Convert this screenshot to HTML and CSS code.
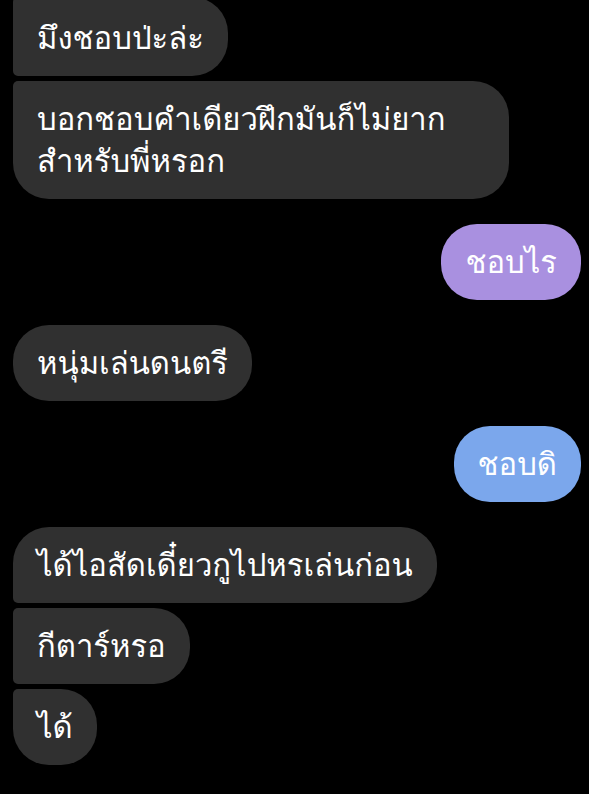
FILE: index.html
```html
<html>
<head>
<meta charset="utf-8">
<link rel="stylesheet" href="styles.css">
</head>
<body>
<div class="chat">

    <!-- first group continues from messages above the fold -->
    <div class="group them continued">
        <div class="bubble">มึงชอบป่ะล่ะ</div>
        <div class="bubble wrapped">บอกชอบคำเดียวฝึกมันก็ไม่ยาก<br>สำหรับพี่หรอก</div>
    </div>

    <div class="group me">
        <div class="bubble purple">ชอบไร</div>
    </div>

    <div class="group them">
        <div class="bubble">หนุ่มเล่นดนตรี</div>
    </div>

    <div class="group me">
        <div class="bubble blue">ชอบดิ</div>
    </div>

    <div class="group them">
        <div class="bubble">ได้ไอสัดเดี๋ยวกูไปหรเล่นก่อน</div>
        <div class="bubble">กีตาร์หรอ</div>
        <div class="bubble">ได้</div>
    </div>

</div>
</body>
</html>
```

FILE: styles.css
```css
body, html {
    margin: 0;
    padding: 0;
    width: 100%;
    height: 100%;
    background: #000;
    font-family: "Loma", "Noto Sans Thai Looped", sans-serif;
    color: #fff;
}

.chat {
    display: flex;
    flex-direction: column;
    gap: 25px;
    padding: 0 8px 0 13px;
    margin-top: -3px;
}

.group {
    display: flex;
    flex-direction: column;
    gap: 5px;
}

.group.them {
    align-items: flex-start;
}

.group.me {
    align-items: flex-end;
}

.bubble {
    box-sizing: border-box;
    max-width: 496px;
    font-size: 31px;
    line-height: 42px;
    padding: 17px 24px;
    border-radius: 36px;
    background: #303030;
}

/* long message fills the max width, text wraps inside */
.bubble.wrapped {
    width: 496px;
}

/* grouped bubbles get tight corners on the sender side */
.them .bubble:not(:last-child) {
    border-bottom-left-radius: 5px;
}

.them .bubble:not(:first-child),
.continued .bubble:first-child {
    border-top-left-radius: 5px;
}

.continued .bubble:first-child {
    padding-top: 20px;
}

.purple {
    background: #a990e0;
}

.blue {
    background: #7ba7ec;
}
```
